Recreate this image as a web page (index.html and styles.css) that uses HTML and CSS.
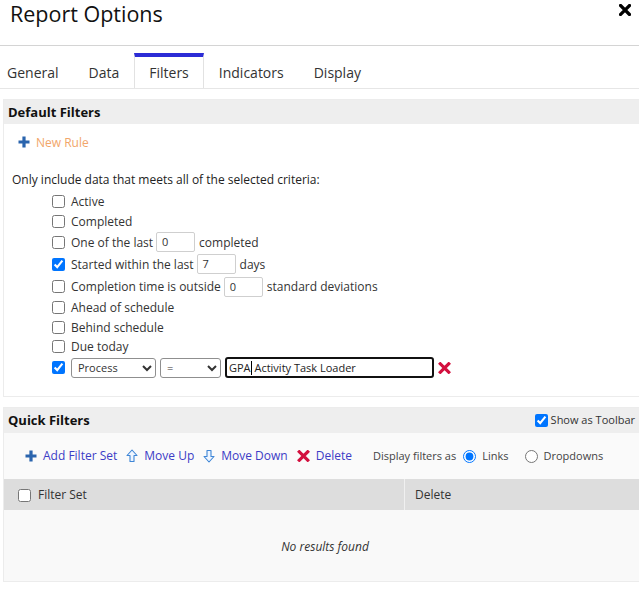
FILE: index.html
```html
<!DOCTYPE html>
<html lang="en">
<head>
<meta charset="utf-8">
<title>Report Options</title>
<link rel="stylesheet" href="styles.css">
</head>
<body>
<div class="page">
  <header class="dlg-head">
    <h1 class="title">Report Options</h1>
    <span class="close" aria-label="Close">
      <svg viewBox="0 0 12 12" width="12" height="12"><path d="M1.5 1.5 L10.5 10.5 M10.5 1.5 L1.5 10.5" stroke="#000" stroke-width="3.2" stroke-linecap="square"/></svg>
    </span>
  </header>

  <nav class="tabs">
    <span class="tab first">General</span>
    <span class="tab">Data</span>
    <span class="tab active">Filters</span>
    <span class="tab">Indicators</span>
    <span class="tab">Display</span>
  </nav>

  <section class="panel">
    <div class="panel-head">Default Filters</div>
    <div class="panel-body">
      <div class="new-rule">
        <svg class="ico" viewBox="0 0 12 12" width="12" height="12"><path d="M4.4 0.5 H7.6 V4.4 H11.5 V7.6 H7.6 V11.5 H4.4 V7.6 H0.5 V4.4 H4.4 Z" fill="#2a64ad"/></svg>
        <span>New Rule</span>
      </div>
      <p class="intro">Only include data that meets all of the selected criteria:</p>
      <ul class="criteria">
        <li class="row"><input type="checkbox"><span>Active</span></li>
        <li class="row"><input type="checkbox"><span>Completed</span></li>
        <li class="row tall"><input type="checkbox"><span>One of the last</span><span class="num">0</span><span>completed</span></li>
        <li class="row tall"><input type="checkbox" checked><span>Started within the last</span><span class="num">7</span><span>days</span></li>
        <li class="row tall"><input type="checkbox"><span>Completion time is outside</span><span class="num">0</span><span>standard deviations</span></li>
        <li class="row"><input type="checkbox"><span>Ahead of schedule</span></li>
        <li class="row"><input type="checkbox"><span>Behind schedule</span></li>
        <li class="row"><input type="checkbox"><span>Due today</span></li>
        <li class="row tall">
          <input type="checkbox" checked>
          <select class="sel sel-process"><option>Process</option></select>
          <select class="sel sel-op"><option>=</option></select>
          <span class="text-field">GPA<span class="caret"></span> Activity Task Loader</span>
          <svg class="remove" viewBox="0 0 12 12" width="13" height="12"><path d="M1.8 1.8 L10.2 10.2 M10.2 1.8 L1.8 10.2" stroke="#d3103e" stroke-width="3.2" stroke-linecap="square"/></svg>
        </li>
      </ul>
    </div>
  </section>

  <section class="panel quick">
    <div class="panel-head split">
      <span>Quick Filters</span>
      <label class="toolbar-opt"><input type="checkbox" checked><span>Show as Toolbar</span></label>
    </div>
    <div class="qtoolbar">
      <span class="qlink">
        <svg class="ico" viewBox="0 0 12 12" width="12" height="12"><path d="M4.4 0.5 H7.6 V4.4 H11.5 V7.6 H7.6 V11.5 H4.4 V7.6 H0.5 V4.4 H4.4 Z" fill="#2a64ad"/></svg>
        Add Filter Set
      </span>
      <span class="qlink">
        <svg class="ico" viewBox="0 0 12 14" width="12" height="14"><path d="M6 1 L11 6.5 H8 V12.5 H4 V6.5 H1 Z" fill="#eef5ff" stroke="#3f86d6" stroke-width="1.1" stroke-linejoin="round"/></svg>
        Move Up
      </span>
      <span class="qlink">
        <svg class="ico" viewBox="0 0 12 14" width="12" height="14"><path d="M6 13 L11 7.5 H8 V1.5 H4 V7.5 H1 Z" fill="#eef5ff" stroke="#3f86d6" stroke-width="1.1" stroke-linejoin="round"/></svg>
        Move Down
      </span>
      <span class="qlink">
        <svg class="ico" viewBox="0 0 12 12" width="13" height="12"><path d="M1.8 1.8 L10.2 10.2 M10.2 1.8 L1.8 10.2" stroke="#d3103e" stroke-width="3.2" stroke-linecap="square"/></svg>
        Delete
      </span>
      <span class="display-as">Display filters as</span>
      <label class="radio"><input type="radio" name="disp" checked><span>Links</span></label>
      <label class="radio"><input type="radio" name="disp"><span>Dropdowns</span></label>
    </div>
    <div class="qtable">
      <div class="qhead">
        <div class="qcol1"><input type="checkbox"><span>Filter Set</span></div>
        <div class="qcol2">Delete</div>
      </div>
      <div class="qempty">No results found</div>
    </div>
  </section>
</div>
</body>
</html>
```

FILE: styles.css
```css
* { box-sizing: border-box; }

html, body {
  margin: 0;
  padding: 0;
  background: #fff;
}

body {
  font-family: "Open Sans", "Liberation Sans", sans-serif;
  font-size: 12px;
  color: #333;
  overflow: hidden;
}

.page {
  width: 639px;
  height: 602px;
  overflow: hidden;
}

/* header */
.dlg-head {
  height: 46px;
  border-bottom: 1px solid #d4d4d4;
  display: flex;
  justify-content: space-between;
  align-items: flex-start;
}

.title {
  margin: 0 0 0 10px;
  font-size: 21.5px;
  line-height: 27px;
  font-weight: 400;
  color: #111;
}

.close {
  display: flex;
  margin: 4px 8px 0 0;
}

/* tabs */
.tabs {
  height: 43px;
  display: flex;
  align-items: flex-end;
  border-bottom: 1px solid #e6e6e6;
}

.tab {
  height: 35px;
  padding: 0 14px;
  border-top: 4px solid transparent;
  border-left: 1px solid transparent;
  border-right: 1px solid transparent;
  font-size: 14px;
  line-height: 31px;
  color: #333;
}

.tab.first { padding-left: 6px; }

.tab.active {
  border-top-color: #2c2cd6;
  border-left-color: #e2e2e2;
  border-right-color: #e2e2e2;
}

/* panels */
.panel {
  width: 644px;
  margin: 10px 0 0 3px;
  border: 1px solid #ececec;
}

.panel-head {
  height: 24px;
  padding-left: 4px;
  background: #eeeeee;
  font-size: 13px;
  font-weight: 700;
  line-height: 24px;
  color: #111;
}

.panel-head.split {
  height: 25px;
  display: flex;
  justify-content: space-between;
  align-items: center;
  padding-right: 11px;
}

.panel-body {
  padding: 9px 0 17px 0;
}

.new-rule {
  display: flex;
  align-items: center;
  gap: 6px;
  margin-left: 14px;
  height: 18px;
  color: #f2a66a;
}

.ico { display: block; flex: none; }

.intro {
  margin: 20px 0 0 8px;
  line-height: 18px;
  color: #222;
}

.criteria {
  list-style: none;
  margin: 3px 0 0 48px;
  padding: 0;
}

.row {
  height: 19.6px;
  display: flex;
  align-items: center;
}

.row.tall { height: 22.2px; }

.row input[type="checkbox"] {
  width: 13px;
  height: 13px;
  margin: 0 6px 0 0;
}

.num {
  width: 39px;
  height: 20px;
  margin: 0 4px 0 3px;
  padding-left: 5px;
  border: 1px solid #cfcfcf;
  border-radius: 2px;
  font-size: 11px;
  line-height: 18px;
  color: #333;
}

.sel {
  height: 20px;
  margin: 0 4px 0 0;
  padding: 0 2px;
  font-family: "Open Sans", "Liberation Sans", sans-serif;
  font-size: 11px;
  color: #333;
  border: 1px solid #8f8f8f;
  border-radius: 3px;
  background: #fff;
}

.sel-process { width: 85px; }
.sel-op { width: 61px; }

.text-field {
  width: 209px;
  height: 21px;
  padding-left: 2px;
  border: 2px solid #111;
  border-radius: 3px;
  font-size: 11px;
  line-height: 17px;
  color: #222;
  display: flex;
  align-items: center;
  white-space: pre;
}

.caret {
  display: inline-block;
  width: 1px;
  height: 14px;
  background: #000;
}

.remove {
  margin-left: 4px;
  display: block;
}

/* quick filters */
.quick { margin-top: 10px; }

.toolbar-opt {
  display: flex;
  align-items: center;
  font-size: 11px;
  font-weight: 400;
  color: #333;
}

.toolbar-opt input {
  width: 13px;
  height: 13px;
  margin: 0 3px 0 0;
}

.qtoolbar {
  height: 46px;
  display: flex;
  align-items: center;
  padding-left: 21px;
  background: #fafafa;
}

.qlink {
  display: flex;
  align-items: center;
  gap: 6px;
  margin-right: 9px;
  color: #3c3cc6;
}

.display-as {
  margin-left: 12px;
  margin-right: 7px;
  font-size: 11px;
  color: #444;
}

.radio {
  display: flex;
  align-items: center;
  font-size: 11px;
  color: #444;
  margin-right: 16px;
}

.radio input {
  width: 13px;
  height: 13px;
  margin: 2px 6px 0 0;
}

.qtable { background: #f9f9f9; }

.qhead {
  display: grid;
  grid-template-columns: 400px 1fr;
  height: 31px;
  background: #dddddd;
}

.qcol1 {
  display: flex;
  align-items: center;
  padding-left: 14px;
  color: #333;
}

.qcol1 input {
  width: 13px;
  height: 13px;
  margin: 2px 7px 0 0;
}

.qcol2 {
  display: flex;
  align-items: center;
  padding-left: 10px;
  border-left: 1px solid #f0f0f0;
  color: #333;
}

.qempty {
  height: 71px;
  display: flex;
  align-items: center;
  justify-content: center;
  font-style: italic;
  color: #333;
  padding-top: 2px;
}
```
